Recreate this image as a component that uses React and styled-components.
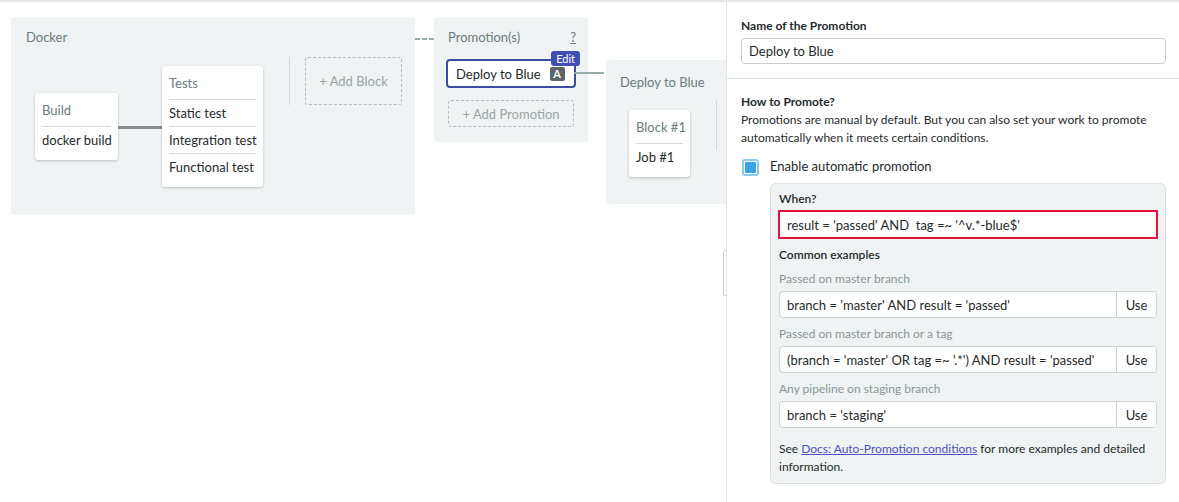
import styled, { createGlobalStyle } from "styled-components";

const GlobalStyle = createGlobalStyle`
  body {
    margin: 0;
    font-family: Lato, "Liberation Sans", sans-serif;
    color: #1f2b2b;
    background: #fff;
  }
  * {
    box-sizing: border-box;
  }
`;

export const Page = styled.div`
  display: flex;
  width: 1179px;
  height: 502px;
  border-top: 2px solid #e4e8e8;
  overflow: hidden;
`;

export const Canvas = styled.div`
  position: relative;
  flex: 0 0 726px;
  overflow: hidden;
  display: flex;
  align-items: flex-start;
  padding: 15px 0 0 11px;
`;

export const Stage = styled.div`
  flex: 0 0 auto;
  background: #eff3f3;
  border-radius: 4px;
  padding: ${(p) => p.$pad || "12px 13px 28px 15px"};
  margin: ${(p) => p.$m || 0};
`;

export const StageTitle = styled.div`
  display: flex;
  justify-content: space-between;
  font-size: 13px;
  line-height: 16px;
  color: #6c7b7b;
  padding-left: ${(p) => p.$indent || 0}px;
  a {
    color: #6c7b7b;
    text-decoration: underline;
  }
`;

export const StageRow = styled.div`
  display: flex;
  align-items: flex-start;
  margin-top: ${(p) => p.$top || 12}px;
`;

export const Jobs = styled.div`
  display: flex;
  align-items: center;
  margin: 9px 0 0 9px;
`;

export const Card = styled.div`
  background: #fff;
  border-radius: 3px;
  box-shadow: 0 1px 3px rgba(0, 0, 0, 0.22);
  padding: 4px 7px 7px;
  width: ${(p) => p.$w}px;
  margin: ${(p) => p.$m || 0};
`;

export const CardTitle = styled.div`
  font-size: 13px;
  line-height: 27px;
  padding-bottom: 2px;
  color: #6c7b7b;
  white-space: nowrap;
`;

export const CardItem = styled.div`
  font-size: 13px;
  line-height: 26px;
  border-top: 1px solid #d5dbdb;
  white-space: nowrap;
  color: #1f2b2b;
`;

export const Link = styled.div`
  width: ${(p) => p.$w}px;
  height: 3px;
  background: #878d8d;
  margin-top: 1px;
`;

export const VSep = styled.div`
  width: 1px;
  height: ${(p) => p.$h || 48}px;
  background: #d3d9d9;
  margin: ${(p) => p.$m || "0 15px 0 26px"};
`;

export const AddBox = styled.div`
  width: ${(p) => p.$w}px;
  height: ${(p) => p.$h}px;
  border: 1px dashed #b4bdbd;
  border-radius: 3px;
  display: flex;
  align-items: center;
  justify-content: center;
  font-size: 13px;
  color: #9aa5a5;
  margin: ${(p) => p.$m || 0};
`;

export const DashLink = styled.div`
  width: 19px;
  height: 2px;
  margin-top: 21px;
  background: repeating-linear-gradient(
    to right,
    #9aabab 0 5px,
    transparent 5px 7px
  );
  flex: 0 0 auto;
`;

export const PromoCard = styled.div`
  position: relative;
  margin-top: 14px;
  width: 130px;
  height: 29px;
  border: 2px solid #3c4aa8;
  border-radius: 4px;
  background: #fff;
  display: flex;
  align-items: center;
  padding: 0 0 0 8px;
  font-size: 13px;
  &::after {
    content: "";
    position: absolute;
    left: 100%;
    top: 11px;
    width: 30px;
    height: 2px;
    background: #9aabab;
  }
`;

export const Badge = styled.span`
  margin-left: 9px;
  width: 15px;
  height: 14px;
  background: #5b6666;
  color: #fff;
  font-size: 11px;
  font-weight: 700;
  border-radius: 2px;
  display: inline-flex;
  align-items: center;
  justify-content: center;
`;

export const EditTag = styled.span`
  position: absolute;
  top: -10px;
  right: -6px;
  background: #3f4fb4;
  color: #fff;
  font-size: 11px;
  line-height: 15px;
  padding: 0 5px;
  border-radius: 3px;
`;

export const Handle = styled.div`
  position: absolute;
  right: -3px;
  top: 248px;
  width: 6px;
  height: 46px;
  border: 1px solid #c9d1d1;
  border-radius: 2px;
  background: #fff;
  z-index: 2;
`;

export const Panel = styled.div`
  position: relative;
  flex: 1;
  border-left: 1px solid #e0e5e5;
`;

export const Section = styled.div`
  padding: ${(p) => p.$pad};
  border-bottom: ${(p) => (p.$line ? "1px solid #dbe0e0" : "none")};
`;

export const Label = styled.div`
  font-size: 12px;
  font-weight: 700;
  line-height: 16px;
  color: #1f2b2b;
`;

export const TextInput = styled.div`
  margin-top: 4px;
  height: 26px;
  border: 1px solid #c7cfcf;
  border-radius: 4px;
  font-size: 13px;
  display: flex;
  align-items: center;
  padding-left: 7px;
`;

export const Para = styled.p`
  margin: 1px 0 0;
  font-size: 12px;
  line-height: 18px;
`;

export const CheckRow = styled.div`
  display: flex;
  align-items: center;
  margin-top: 9px;
  font-size: 13px;
`;

export const Check = styled.span`
  width: 17px;
  height: 17px;
  border: 2px solid #86cdf1;
  border-radius: 3px;
  padding: 1px;
  margin: 3px 11px 0 1px;
  display: inline-flex;
  &::before {
    content: "";
    flex: 1;
    background: #3aa3e4;
    border-radius: 1px;
  }
`;

export const AutoBox = styled.div`
  margin: 7px 0 0 29px;
  background: #eff3f3;
  border: 1px solid #dbe1e1;
  border-radius: 6px;
  padding: 7px 7px 7px 7px;
`;

export const SubLabel = styled.div`
  font-size: 12px;
  font-weight: 600;
  line-height: 16px;
  margin-left: 1px;
  margin-top: ${(p) => p.$top || 0}px;
`;

export const WhenInput = styled.div`
  margin-top: 3px;
  height: 29px;
  border: 2px solid #e3123c;
  background: #fff;
  font-size: 13px;
  display: flex;
  align-items: center;
  padding-left: 7px;
`;

export const Hint = styled.div`
  font-size: 12px;
  line-height: 16px;
  color: #8a9797;
  margin: 8px 0 0 1px;
`;

export const Group = styled.div`
  display: flex;
  margin: 4px 1px 0 1px;
  height: 27px;
  border: 1px solid #ccd3d3;
  border-radius: 4px;
  background: #fff;
  overflow: hidden;
`;

export const GroupText = styled.div`
  flex: 1;
  font-size: 13px;
  display: flex;
  align-items: center;
  padding-left: 7px;
`;

export const UseButton = styled.button`
  width: 40px;
  border: none;
  border-left: 1px solid #ccd3d3;
  background: #fff;
  font-family: inherit;
  font-size: 13px;
  color: #1f2b2b;
  padding: 0;
`;

export const Footnote = styled.p`
  margin: 12px 0 0 1px;
  font-size: 12px;
  line-height: 18px;
`;

export const DocLink = styled.a`
  color: #4a52c4;
  text-decoration: underline;
`;

const examples = [
  {
    hint: "Passed on master branch",
    value: "branch = 'master' AND result = 'passed'",
  },
  {
    hint: "Passed on master branch or a tag",
    value: "(branch = 'master' OR tag =~ '.*') AND result = 'passed'",
  },
  {
    hint: "Any pipeline on staging branch",
    value: "branch = 'staging'",
  },
];

const App = () => {
  return (
    <>
      <GlobalStyle />
      <Page>
        <Canvas>
          <Stage>
            <StageTitle>Docker</StageTitle>
            <StageRow>
              <Jobs>
                <Card $w={83}>
                  <CardTitle>Build</CardTitle>
                  <CardItem>docker build</CardItem>
                </Card>
                <Link $w={44} />
                <Card $w={101}>
                  <CardTitle>Tests</CardTitle>
                  <CardItem>Static test</CardItem>
                  <CardItem>Integration test</CardItem>
                  <CardItem>Functional test</CardItem>
                </Card>
              </Jobs>
              <VSep />
              <AddBox $w={97} $h={48}>
                + Add Block
              </AddBox>
            </StageRow>
          </Stage>
          <DashLink />
          <Stage $pad="12px 12px 15px 12px">
            <StageTitle $indent={2}>
              <span>Promotion(s)</span>
              <a>?</a>
            </StageTitle>
            <PromoCard>
              Deploy to Blue
              <Badge>A</Badge>
              <EditTag>Edit</EditTag>
            </PromoCard>
            <AddBox $w={126} $h={27} $m="12px 0 0 2px">
              + Add Promotion
            </AddBox>
          </Stage>
          <Stage $pad="14px 0 27px 14px" $m="43px 0 0 18px">
            <StageTitle>Deploy to Blue</StageTitle>
            <StageRow $top={20}>
              <Card $w={61} $m="0 0 0 9px">
                <CardTitle>Block #1</CardTitle>
                <CardItem>Job #1</CardItem>
              </Card>
              <VSep $h={50} $m="-10px 40px 0 26px" />
            </StageRow>
          </Stage>
          <Handle />
        </Canvas>
        <Panel>
          <Section $pad="16px 13px 14px 14px" $line>
            <Label>Name of the Promotion</Label>
            <TextInput>Deploy to Blue</TextInput>
          </Section>
          <Section $pad="15px 13px 0 14px">
            <Label>How to Promote?</Label>
            <Para>
              Promotions are manual by default. But you can also set your work to
              promote automatically when it meets certain conditions.
            </Para>
            <CheckRow>
              <Check />
              Enable automatic promotion
            </CheckRow>
            <AutoBox>
              <SubLabel>When?</SubLabel>
              <WhenInput>result = 'passed' AND&nbsp; tag =~ '^v.*-blue$'</WhenInput>
              <SubLabel $top={8}>Common examples</SubLabel>
              {examples.map((ex) => (
                <div key={ex.hint}>
                  <Hint>{ex.hint}</Hint>
                  <Group>
                    <GroupText>{ex.value}</GroupText>
                    <UseButton>Use</UseButton>
                  </Group>
                </div>
              ))}
              <Footnote>
                See <DocLink href="#docs">Docs: Auto-Promotion conditions</DocLink>{" "}
                for more examples and detailed information.
              </Footnote>
            </AutoBox>
          </Section>
        </Panel>
      </Page>
    </>
  );
};

export default App;
